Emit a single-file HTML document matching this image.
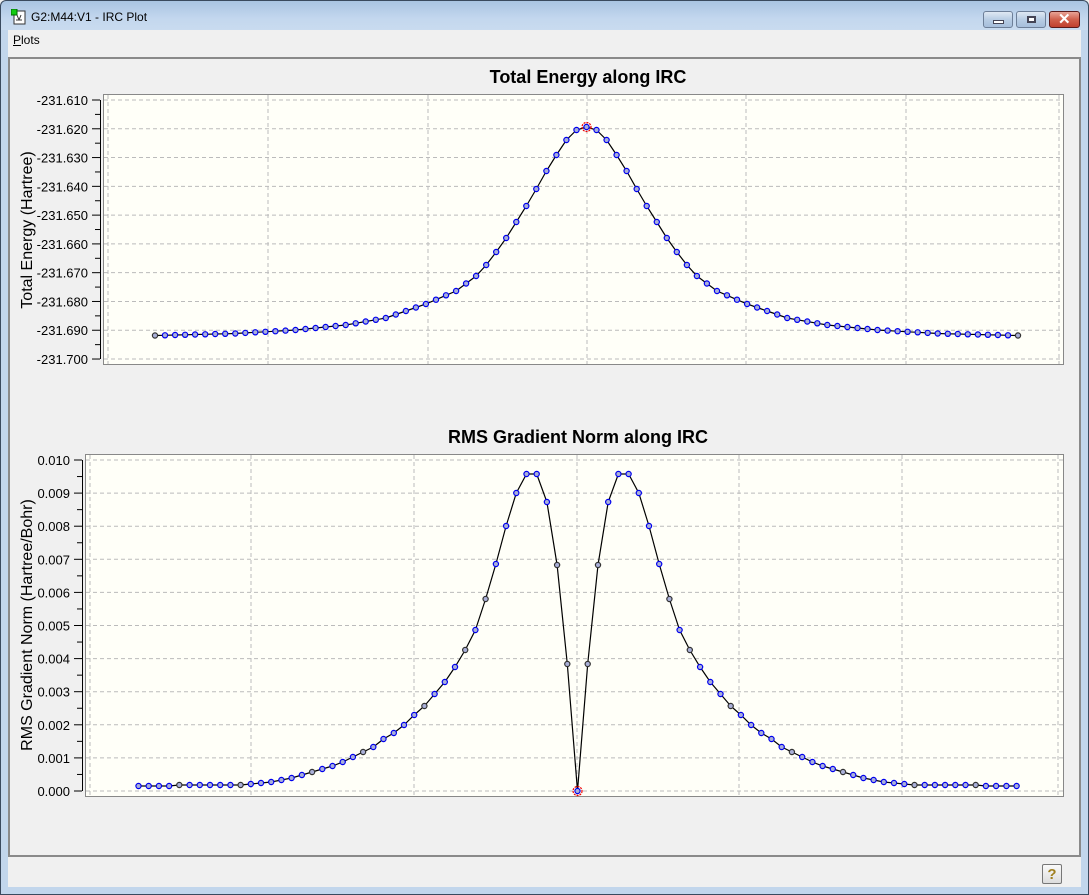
<!DOCTYPE html>
<html><head><meta charset="utf-8"><style>
*{margin:0;padding:0;box-sizing:border-box}
body{width:1089px;height:895px;overflow:hidden;background:#f0f0f0;font-family:"Liberation Sans",sans-serif;position:relative}
.tb{position:absolute;left:0;top:0;width:1089px;height:30px;background:linear-gradient(#a9c4e2,#c3d7ee 60%,#c9dbef);border:1px solid #3a4a5e;border-bottom:none;border-radius:6px 6px 0 0}
.title{position:absolute;left:30px;top:9px;font-size:12px;color:#000}
.lb{position:absolute;left:0;top:30px;width:8px;height:865px;background:#c2d6ec;border-left:1px solid #3a4a5e}
.rb{position:absolute;right:0;top:30px;width:8px;height:865px;background:#c2d6ec;border-right:1px solid #3a4a5e}
.bb{position:absolute;left:0;bottom:0;width:1089px;height:8px;background:#c2d6ec;border:1px solid #3a4a5e;border-top:none}
.panel{position:absolute;left:8px;top:57px;width:1073px;height:800px;border:2px solid #8a8a8a;border-right-color:#8a8a8a;background:#f0f0f0}
.btn{position:absolute;top:10px;height:17px;border:1px solid #6d7f98;border-radius:3px;background:linear-gradient(#dfe8f3,#b8cde4 50%,#a6bedb)}
</style></head><body>
<div class="tb">
<svg style="position:absolute;left:10px;top:8px" width="16" height="16"><rect x="3" y="2" width="11" height="13" fill="#fff" stroke="#333"/><rect x="0" y="0" width="6" height="6" fill="#1c1" stroke="#060"/><path d="M6 6l2 5M10 6l-2 5M5 11h6" stroke="#333"/></svg>
<div class="title">G2:M44:V1 - IRC Plot</div>
<div class="btn" style="left:982px;width:30px"><div style="position:absolute;left:9px;top:8px;width:11px;height:4px;background:#fff;border:1px solid #445"></div></div>
<div class="btn" style="left:1015px;width:30px"><div style="position:absolute;left:10px;top:4px;width:9px;height:7px;border:2px solid #445;background:#fff"></div></div>
<div class="btn" style="left:1048px;width:31px;border-color:#5a1a1a;background:linear-gradient(#e8a496,#d0604c 50%,#c0402e)"><div style="position:absolute;left:8px;top:-2px;color:#fff;font-weight:bold;font-size:15px">✕</div></div>
</div>
<div class="lb"></div><div class="rb"></div><div class="bb"></div>
<div style="position:absolute;left:13px;top:33px;font-size:12px"><u>P</u>lots</div>
<div class="panel"></div>
<div style="position:absolute;left:1042px;top:864px;width:20px;height:20px;border:1px solid #777;border-radius:2px;background:linear-gradient(#fafafa,#ddd);text-align:center;font-weight:bold;color:#a08020;font-size:15px;line-height:19px">?</div>
<svg id="s" style="position:absolute;left:0;top:0" width="1089" height="895"></svg>
<script>
var s='';
function T(x,y,t,a,sz,b){return '<text x="'+x+'" y="'+y+'" font-size="'+sz+'" text-anchor="'+a+'" font-family="Liberation Sans,sans-serif"'+(b?' font-weight="bold"':'')+'>'+t+'</text>';}
// plot1
s+='<rect x="103.5" y="94.5" width="960" height="270" fill="#fffff8" stroke="#888"/>';
var g1=[];for(var k=0;k<10;k++)g1.push(100+k*28.78);
g1.forEach(function(y,k){s+='<line x1="104" x2="1063" y1="'+y+'" y2="'+y+'" stroke="#bbb" stroke-dasharray="4,3"/>';
s+='<line x1="92" x2="100" y1="'+y+'" y2="'+y+'" stroke="#000"/>'; if(k<9) s+='<line x1="95" x2="100" y1="'+(y+14.4)+'" y2="'+(y+14.4)+'" stroke="#000"/>';
s+=T(88,y+5,'-231.'+(610+k*10),'end',13);});
s+='<line x1="100.5" x2="100.5" y1="100" y2="359" stroke="#000"/>';
[108,268,428,587,746,906,1059].forEach(function(x){s+='<line x1="'+x+'" x2="'+x+'" y1="95" y2="364" stroke="#bbb" stroke-dasharray="4,3"/>';});
s+=T(588,83,'Total Energy along IRC','middle',18,1);
s+='<text transform="translate(32,230) rotate(-90)" font-size="16" text-anchor="middle" font-family="Liberation Sans,sans-serif">Total Energy (Hartree)</text>';
// plot2
s+='<rect x="85.5" y="454.5" width="978" height="342" fill="#fffff8" stroke="#888"/>';
for(var k=0;k<11;k++){var y=460+k*33.1;s+='<line x1="86" x2="1063" y1="'+y+'" y2="'+y+'" stroke="#bbb" stroke-dasharray="4,3"/>';
s+='<line x1="74" x2="82" y1="'+y+'" y2="'+y+'" stroke="#000"/>'; if(k<10) s+='<line x1="77" x2="82" y1="'+(y+16.55)+'" y2="'+(y+16.55)+'" stroke="#000"/>';
s+=T(70,y+5,'0.0'+(k==0?'10':'0'+(10-k)),'end',13);}
s+='<line x1="82.5" x2="82.5" y1="460" y2="791" stroke="#000"/>';
[90,251,414,577,739,902,1058].forEach(function(x){s+='<line x1="'+x+'" x2="'+x+'" y1="455" y2="796" stroke="#bbb" stroke-dasharray="4,3"/>';});
s+=T(578,443,'RMS Gradient Norm along IRC','middle',18,1);
s+='<text transform="translate(32,625) rotate(-90)" font-size="16" text-anchor="middle" font-family="Liberation Sans,sans-serif">RMS Gradient Norm (Hartree/Bohr)</text>';
function interp(kn,i){for(var a=0;a<kn.length-1;a++){if(i>=kn[a][0]&&i<=kn[a+1][0]){var t=(i-kn[a][0])/(kn[a+1][0]-kn[a][0]);return kn[a][1]+t*(kn[a+1][1]-kn[a][1]);}}return kn[kn.length-1][1];}
var ek=[[0,0],[1,3],[2,13],[3,28],[4,44],[5,62],[6,79],[7,95],[8,111],[9,125],[10,138],[11,149],[13,164],[16,177],[20,191],[24,198],[29,203],[35,206.5],[43,208.5]];
var p1=[];for(var j=0;j<=86;j++){var i=Math.abs(43-j);p1.push([155+j*10.035,127+interp(ek,i)]);}
var gy=[786,786,786,786,785,785,785,785,785,785,785,784,783,782,780,778,775,772,769,766,762,757,752,747,739,733,725,715,706,694,682,667,650,630,599,564,526,493,474,474,502,565,664,791];
var p2=[];for(var j=0;j<=86;j++){var jj=j<=43?j:86-j;p2.push([138.5+j*10.21,gy[jj]]);}
function draw(p,c,blk){s+='<polyline fill="none" stroke="#000" stroke-width="1.2" points="'+p.map(function(q){return q[0].toFixed(1)+','+q[1].toFixed(1)}).join(' ')+'"/>';
p.forEach(function(q,j){var b=blk.indexOf(Math.abs(j-c))>=0;s+='<circle cx="'+q[0].toFixed(1)+'" cy="'+q[1].toFixed(1)+'" r="2.6" fill="#aab0d8" stroke="'+(b?'#333':'#0000ee')+'" stroke-width="1.2"/>';});
s+='<circle cx="'+p[c][0]+'" cy="'+p[c][1]+'" r="4.5" fill="none" stroke="#e00" stroke-width="1.2" stroke-dasharray="2,1"/>';}
draw(p1,43,[43]);draw(p2,43,[1,2,9,11,15,21,26,33,39]);
document.getElementById('s').innerHTML=s;
</script>
</body></html>
